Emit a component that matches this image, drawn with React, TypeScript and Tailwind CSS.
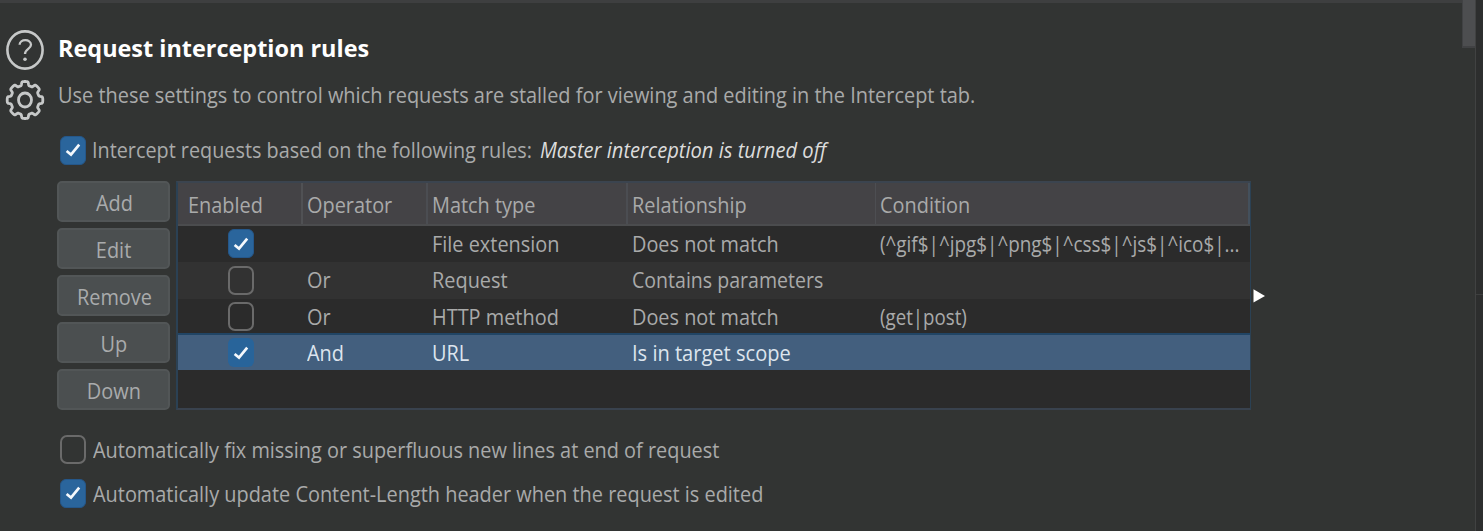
import type { ReactNode } from "react";

function Check({ on, selected = false }: { on: boolean; selected?: boolean }) {
  if (!on) {
    return <span className="block h-[29px] w-[26px] shrink-0 rounded-[7px] border-2 border-[#6a6a6a]" />;
  }
  return (
    <span
      className={
        selected
          ? "flex h-[29px] w-[26px] shrink-0 items-center justify-center rounded-[6px] bg-[#28649a]"
          : "flex h-[29px] w-[26px] shrink-0 items-center justify-center rounded-[6px] border border-[#25578a] bg-[#2a659c]"
      }
    >
      <svg className="mr-px" width="16" height="16" viewBox="0 0 16 16" fill="none">
        <path d="M1.6 9 L6 12.6 L14.2 2.6" stroke="#f4f8fc" strokeWidth="2.7" />
      </svg>
    </span>
  );
}

function Text({ children, className = "" }: { children: ReactNode; className?: string }) {
  return (
    <span className={`block origin-left whitespace-nowrap ${className || "scale-x-[0.905]"}`}>{children}</span>
  );
}

// Eight rounded teeth: the radius swings between tooth and notch, flattened at both ends.
const gearPath =
  Array.from({ length: 192 }, (_, i) => {
    const a = (i / 192) * Math.PI * 2;
    const r = 16 + 1.8 * Math.tanh(3 * Math.cos(8 * a) + 0.5);
    return `${i === 0 ? "M" : "L"}${(20 + r * Math.cos(a)).toFixed(2)} ${(21 + r * 1.04 * Math.sin(a)).toFixed(2)}`;
  }).join(" ") + " Z";

const buttons = ["Add", "Edit", "Remove", "Up", "Down"];

const headers = [
  { label: "Enabled", cell: "w-[125px] pl-[10px] border-r-2 border-[#505154]" },
  { label: "Operator", cell: "w-[125px] pl-[4px] border-r-2 border-[#4b4d52]" },
  { label: "Match type", cell: "w-[200px] pl-[4px] border-r-2 border-[#4b4d52]" },
  { label: "Relationship", cell: "w-[248px] pl-[4px] border-r border-[#4d4e52]" },
  { label: "Condition", cell: "flex-1 pl-[4px] border-r-2 border-[#44505c]" },
];

const rows = [
  { on: true, op: "", type: "File extension", rel: "Does not match", cond: "(^gif$|^jpg$|^png$|^css$|^js$|^ico$|...", style: "h-[36px] bg-[#2b2b2b] pb-[2px]", box: "pt-px", relScale: "scale-x-[0.903]" },
  { on: false, op: "Or", type: "Request", rel: "Contains parameters", cond: "", style: "h-[37px] bg-[#323232] pb-[3px]", box: "pt-[2px]", relScale: "scale-x-[0.889]" },
  { on: false, op: "Or", type: "HTTP method", rel: "Does not match", cond: "(get|post)", style: "h-[34px] bg-[#2b2b2b] pb-px", box: "pt-[2px]", relScale: "scale-x-[0.903]" },
  { on: true, op: "And", type: "URL", rel: "Is in target scope", cond: "", style: "h-[37px] border-t-2 border-[#214565] bg-[#435f7e] pb-[2px] text-[#dde5ee]", box: "pt-[2px]", relScale: "scale-x-[0.912]" },
];

export default function App() {
  return (
    <div className="flex h-[531px] w-[1483px] overflow-hidden bg-[#323433] font-['Open_Sans','Noto_Sans',sans-serif] text-[22px] leading-[30px] text-[#a9aaaa]">
      <main className="flex w-[1462px] shrink-0 flex-col border-t-[3px] border-[#3e3f40]">
        <div className="flex h-[128px]">
          <div className="flex w-[57px] shrink-0 flex-col pl-[5px] pt-[26px]">
            <svg width="40" height="42" viewBox="0 0 40 42" fill="none" stroke="#c6c8c8">
              <ellipse cx="20" cy="21" rx="17.6" ry="18.6" strokeWidth="2.6" />
              <path d="M14.6 15.8 C14.6 9.8 26 9.6 26 15.8 C26 20 20 19.8 20 25" strokeWidth="2.3" />
              <circle cx="20" cy="30.2" r="1.8" fill="#c6c8c8" stroke="none" />
            </svg>
            <svg className="mt-[8px]" width="40" height="42" viewBox="0 0 40 42" fill="none" stroke="#c6c8c8" strokeWidth="2.8" strokeLinejoin="round">
              <path d={gearPath} />
              <ellipse cx="20" cy="21" rx="6.5" ry="7" />
            </svg>
          </div>
          <div className="flex flex-col pl-[1px] pt-[30px]">
            <h1 className="origin-left scale-x-[0.976] whitespace-nowrap text-[24px] font-bold text-white">Request interception rules</h1>
            <div className="pt-[16px]">
              <Text className="scale-x-[0.906]">
                Use these settings to control which requests are stalled for viewing and editing in the Intercept tab.
              </Text>
            </div>
          </div>
        </div>

        <label className="flex h-[38px] items-center pl-[60px]">
          <Check on />
          <span className="w-[454px] shrink-0 pb-[2px] pl-[6px]">
            <Text className="scale-x-[0.9]">Intercept requests based on the following rules:</Text>
          </span>
          <em className="pb-[2px] text-[#dcdcdc]">
            <Text className="scale-x-[0.915]">Master interception is turned off</Text>
          </em>
        </label>

        <section className="mt-[12px] flex pl-[57px]">
          <div className="flex w-[113px] flex-col gap-[6px]">
            {buttons.map((b) => (
              <button key={b} className="flex h-[41px] items-center justify-center rounded-[5px] border-2 border-[#525657] bg-[#4b4f50] pl-px text-[#a9abac]">
                <span className="scale-x-[0.905]">{b}</span>
              </button>
            ))}
          </div>
          <div className="ml-[6px] flex h-[229px] w-[1075px] flex-col border-b-2 border-l-2 border-r border-t-2 border-b-[#39424e] border-l-[#2b4154] border-r-[#2b4154] border-t-[#3b444f] bg-[#2b2b2b]">
            <div className="flex h-[43px] shrink-0 border-b-2 border-[#4b4c4e] bg-[#444346]">
              {headers.map((h) => (
                <div key={h.label} className={`flex items-center ${h.cell}`}>
                  <Text>{h.label}</Text>
                </div>
              ))}
            </div>
            {rows.map((r, i) => (
              <div key={i} className={`flex shrink-0 items-center ${r.style}`}>
                <div className={`w-[129px] pl-[50px] ${r.box}`}>
                  <Check on={r.on} selected={i === 3} />
                </div>
                <div className="w-[125px]"><Text>{r.op}</Text></div>
                <div className="w-[200px]"><Text>{r.type}</Text></div>
                <div className="w-[248px]"><Text className={r.relScale}>{r.rel}</Text></div>
                <div className="w-[360px]"><Text className={i === 0 ? "scale-x-[0.858]" : "scale-x-[0.85]"}>{r.cond}</Text></div>
              </div>
            ))}
          </div>
          <svg className="ml-[2px] mt-[107px]" width="13" height="16" viewBox="0 0 13 16">
            <path d="M0.5 1.2 L12 8 L0.5 14.6 Z" fill="#fff" />
          </svg>
        </section>

        <div className="flex flex-col gap-[6px] pl-[60px] pt-[20px]">
          <label className="flex h-[38px] items-center gap-[7px]">
            <Check on={false} />
            <Text className="scale-x-[0.904]">Automatically fix missing or superfluous new lines at end of request</Text>
          </label>
          <label className="flex h-[38px] items-center gap-[7px]">
            <Check on />
            <Text className="scale-x-[0.905]">Automatically update Content-Length header when the request is edited</Text>
          </label>
        </div>
      </main>
      <div className="w-[13px] shrink-0">
        <div className="h-[48px] border-b-2 border-l border-[#414244] bg-[#4d4e50]" />
      </div>
      <div className="flex flex-1 flex-col border-l border-[#414242] bg-[#2d2e2e]">
        <div className="h-[295px] border-b border-[#3e3f3f]" />
      </div>
    </div>
  );
}
